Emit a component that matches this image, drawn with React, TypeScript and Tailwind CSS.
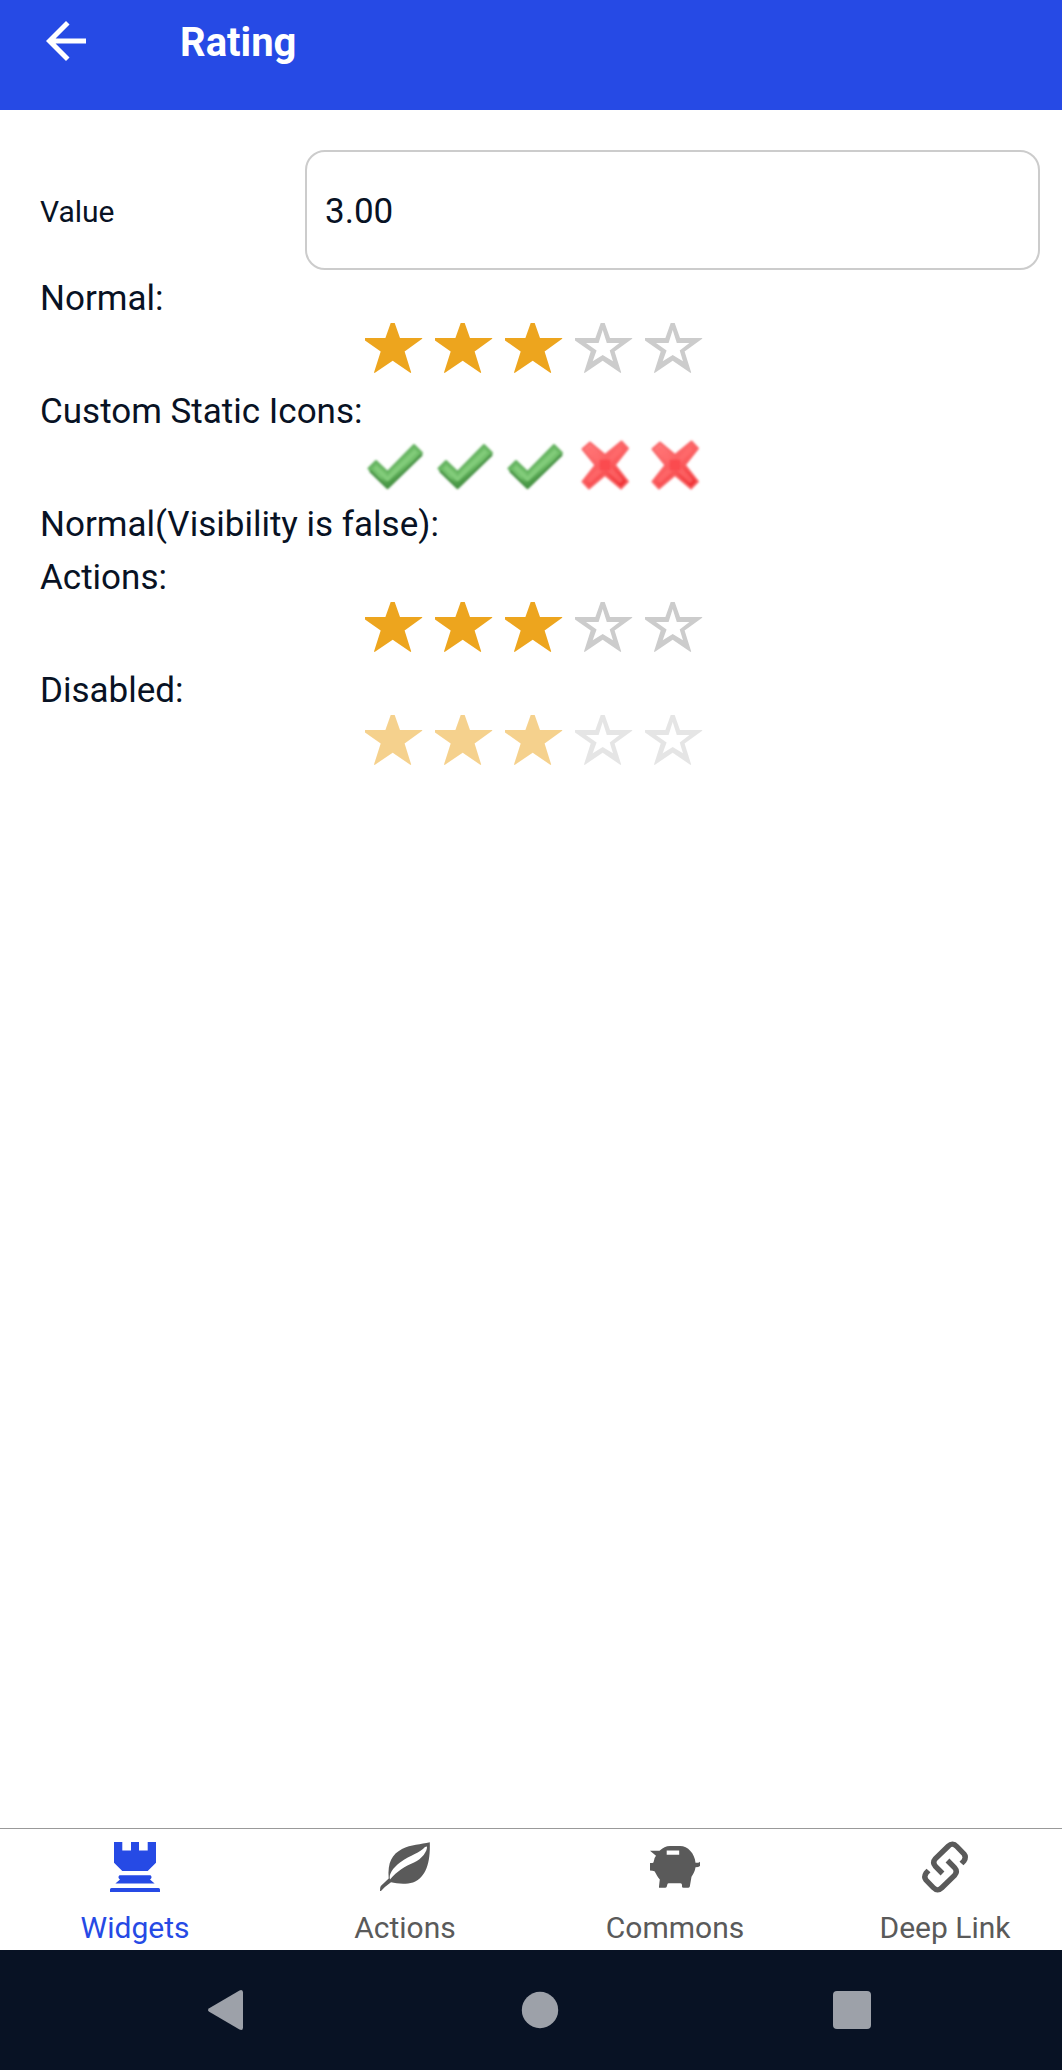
import { useState, type ReactNode } from "react";

function FullStar() {
  return (
    <svg viewBox="-9 0 70 60" className="h-[60px] w-[70px]" fill="#eda51e" aria-hidden="true">
      <path d="M25.7 0H29.7L35 15H57.2V15.7L39.6 28.6 46.2 49.6 45.6 50 27.7 37.7 9.6 50 9 49.4 15.7 28.6 0 17.5V15H20.4Z" />
    </svg>
  );
}

function EmptyStar() {
  return (
    <svg viewBox="-9 0 70 60" className="h-[60px] w-[70px]" fill="#cccccc" fillRule="evenodd" aria-hidden="true">
      <path d="M25.7 0H29.7L35 15H57.2V15.7L39.6 28.6 46.2 49.6 45.6 50 27.7 37.7 9.6 50 9 49.4 15.7 28.6 0 17.5V15H20.4ZM27.7 7 23.6 20H11L21.6 27.4 17.7 38.3 27.7 32 38 38.2 34.7 27.5 44.4 20H31.8Z" />
    </svg>
  );
}

function CheckMark() {
  return (
    <svg viewBox="0 0 70 60" className="h-[60px] w-[70px]" aria-hidden="true">
      <defs>
        <linearGradient id="check-fill" x1="0.35" y1="0.3" x2="0.62" y2="0.72">
          <stop offset="0" stopColor="#6cbb66" />
          <stop offset="0.6" stopColor="#74c26d" />
          <stop offset="1" stopColor="#4c9c49" />
        </linearGradient>
        <filter id="icon-soften">
          <feGaussianBlur stdDeviation="1.1" />
        </filter>
      </defs>
      <g filter="url(#icon-soften)" strokeLinejoin="round">
        <path d="M12.5 32.5 20 25 31.500 36 58 9 66 17 31.500 51.500Z" fill="url(#check-fill)" stroke="#62b05d" strokeWidth="2" />
        <path d="M66 18.500 31.500 52 14 35" fill="none" stroke="#3f8c3d" strokeWidth="2.4" />
        <path d="M19 31 31.500 43 60 15" fill="none" stroke="#82cc7a" strokeWidth="4" />
      </g>
    </svg>
  );
}

function CrossMark() {
  return (
    <svg viewBox="0 0 70 60" className="h-[60px] w-[70px]" aria-hidden="true">
      <defs>
        <linearGradient id="cross-fill" gradientUnits="userSpaceOnUse" x1="24" y1="6" x2="52" y2="52">
          <stop offset="0" stopColor="#ff7c7c" />
          <stop offset="0.55" stopColor="#fb5a5c" />
          <stop offset="1" stopColor="#ee2f33" />
        </linearGradient>
      </defs>
      <g filter="url(#icon-soften)" strokeLinejoin="round">
        <path
          d="M24 6.500 39 19 55.500 5.500 62 12.500 49 29 62 45.500 55 52.500 39 39 23 52.500 16.500 45.500 29.500 29 16.500 13Z"
          fill="url(#cross-fill)"
          stroke="#f96466"
          strokeWidth="2"
        />
        <path d="M24 14 54 44M54 14 24 44" fill="none" stroke="#ff6e70" strokeOpacity="0.6" strokeWidth="5" strokeLinecap="round" />
        <path d="M33.500 23.500H44.500V34.500H33.500Z" fill="#fb4b50" />
      </g>
    </svg>
  );
}

type RatingProps = {
  name: string;
  label: string;
  value: number;
  onChange: (value: number) => void;
  disabled?: boolean;
  full?: ReactNode;
  empty?: ReactNode;
};

function Rating({ name, label, value, onChange, disabled = false, full = <FullStar />, empty = <EmptyStar /> }: RatingProps) {
  return (
    <fieldset className="group" disabled={disabled}>
      <legend className="pt-1 leading-[49px]">{label}</legend>
      <div className="flex h-[60px] justify-center group-disabled:opacity-50">
        {[1, 2, 3, 4, 5].map((n) => (
          <label key={n} className="relative">
            <input
              type="radio"
              className="sr-only"
              name={name}
              aria-label={`${n} of 5`}
              checked={n === Math.round(value)}
              onChange={() => onChange(n)}
            />
            {n <= value ? full : empty}
          </label>
        ))}
      </div>
    </fieldset>
  );
}

const tabs = [
  {
    name: "Widgets",
    icon: (
      <path d="M4 0H12.3V8.5H21V0H29V8.5H37.7V0H46V20.8L37.7 29H12.3L4 20.8ZM9.5 33.3H40.5Q42.8 35.5 40 37.5L44.6 41.6H5.4L10 37.5Q7.2 35.5 9.5 33.3ZM1.5 46H48.5Q50 46 50 47.5V50H0V47.5Q0 46 1.5 46Z" />
    ),
  },
  {
    name: "Actions",
    icon: (
      <path
        fillRule="evenodd"
        d="M49.8.3C41 2.5 31 2.5 22 7 12 12.5 7.500 20 8.700 36.500L.8 44Q0 45 0 49H1Q5 44.500 11 40.300C17 41.800 26 42.500 33 40.500 46 35.500 50.500 21 49.800.3ZM47 4.500C47.500 9 42 17 34 20.500 25 24.300 17 29 10 37.500 8.500 32 13 26 20 20.500 31 12.500 40 11 45 5Z"
      />
    ),
  },
  {
    name: "Commons",
    icon: (
      <path
        fillRule="evenodd"
        d="M0 8.800H9.500C13 5.500 16 4 20 4H30C38 4 44.500 11.500 45.500 20.700H48Q49 20.700 50 19.800V24Q48.500 25.300 45.500 25.300C45 29 43.500 32 41.500 34.800L39.800 44.500Q39.500 45.800 38 45.800H33.500Q32 45.800 32 44.500V43Q32 41.200 30.500 41.200H18.500Q17.300 41.200 17.200 43L16.800 44.500Q16.500 45.800 15 45.800H9Q8.800 45.800 9.800 37.500C7 35 6 31 4.500 29.300Q2.500 28.800 0 28.600V21H2.500Q3.600 21 4 18.500 4.500 15.500 6 13.800ZM16.700 8.500V12.800H29.200V8.500Z"
      />
    ),
  },
  {
    name: "Deep Link",
    icon: (
      <path
        fill="none"
        stroke="currentColor"
        strokeWidth="5.4"
        d="M41.500 21.500 44 18.800Q46.500 15 44 12L36.800 4.500Q32.500 0 28.200 4.200L15.500 16.500Q12 20.500 15.500 24.500L22.500 31.500M8.500 28.500 6 31.200Q3.500 35 6 38L13.200 45.500Q17.500 50 21.800 45.800L34.500 33.500Q38 29.500 34.500 25.500L27.500 18.500"
      />
    ),
  },
];

export default function App() {
  const [value, setValue] = useState(3);
  const [active, setActive] = useState("Widgets");

  return (
    <div className="flex min-h-screen flex-col overflow-x-hidden bg-white font-[Roboto,sans-serif] text-[35px] text-[#081224]">
      <header className="flex h-[110px] items-start bg-[#264ae5] pt-[11px] pl-9 text-white">
        <button type="button" aria-label="Back" className="mr-[84px]">
          <svg viewBox="0 0 24 24" className="h-[60px] w-[60px]" fill="currentColor" aria-hidden="true">
            <path d="M20 11H7.830l5.590-5.590L12 4l-8 8 8 8 1.410-1.410L7.830 13H20v-2z" />
          </svg>
        </button>
        <h1 className="text-[40px] leading-[64px] font-bold">Rating</h1>
      </header>

      <main className="flex-1 pt-10">
        <div className="flex items-center pr-[22px] pl-10">
          <label htmlFor="value" className="w-[265px] shrink-0 pt-0.5 text-[30px]">
            Value
          </label>
          <input
            id="value"
            className="h-[120px] min-w-0 flex-1 rounded-[20px] border-2 border-[#cccccc] px-[18px] pt-0.5 outline-none"
            value={value.toFixed(2)}
            onChange={(e) => setValue(Math.min(5, Number(e.target.value) || 0))}
          />
        </div>
        <div className="px-10">
          <Rating name="normal" label="Normal:" value={value} onChange={setValue} />
          <Rating
            name="custom"
            label="Custom Static Icons:"
            value={value}
            onChange={setValue}
            full={<CheckMark />}
            empty={<CrossMark />}
          />
          <p className="pt-1 leading-[49px]">Normal(Visibility is false):</p>
          <Rating name="actions" label="Actions:" value={value} onChange={setValue} />
          <Rating name="disabled" label="Disabled:" value={value} onChange={setValue} disabled />
        </div>
      </main>

      <nav className="-mr-[18px] grid h-[122px] grid-cols-4 border-t border-[#999999] text-[30px]">
        {tabs.map((tab) => (
          <a
            key={tab.name}
            href="#"
            aria-current={active === tab.name ? "page" : undefined}
            onClick={(e) => {
              e.preventDefault();
              setActive(tab.name);
            }}
            className="flex flex-col items-center gap-4 pt-[13px] text-[#5a5a5a] aria-[current=page]:text-[#264ae5]"
          >
            <svg viewBox="0 0 50 50" className="h-[50px] w-[50px] shrink-0 overflow-visible" fill="currentColor" aria-hidden="true">
              {tab.icon}
            </svg>
            <span className="leading-10">{tab.name}</span>
          </a>
        ))}
      </nav>

      <footer className="-mr-[18px] flex h-[120px] items-center justify-center gap-[252px] bg-[#081224] text-[#9da1a9]">
        <button type="button" aria-label="System back">
          <svg viewBox="0 0 60 60" className="h-[60px] w-[60px]" fill="currentColor" aria-hidden="true">
            <path d="M11.200 28.200 41.500 10.400Q45 9 45 12.500V47.500Q45 51 41.500 49.600L11.200 31.800Q8.800 30 11.200 28.200Z" />
          </svg>
        </button>
        <button type="button" aria-label="Home">
          <svg viewBox="0 0 60 60" className="h-[60px] w-[60px]" fill="currentColor" aria-hidden="true">
            <circle cx="30" cy="30" r="18.200" />
          </svg>
        </button>
        <button type="button" aria-label="Recent apps">
          <svg viewBox="0 0 60 60" className="h-[60px] w-[60px]" fill="currentColor" aria-hidden="true">
            <rect x="11" y="11" width="38" height="38" rx="4" />
          </svg>
        </button>
      </footer>
    </div>
  );
}
